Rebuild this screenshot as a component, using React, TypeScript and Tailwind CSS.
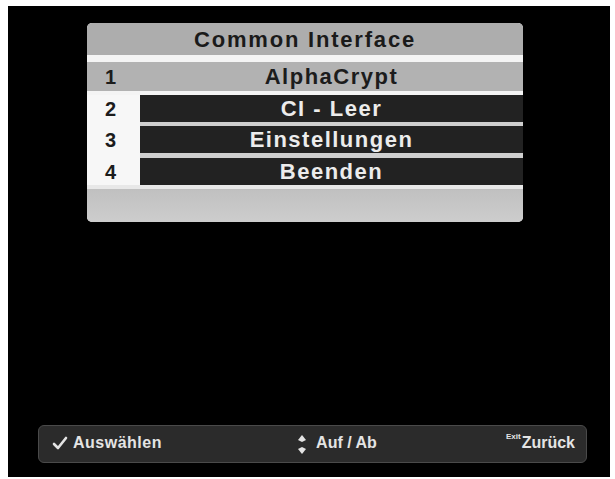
import React from "react";

const font = { fontFamily: '"Liberation Sans", Arial, sans-serif' };

function Row({ n, label, selected }: { n: string; label: string; selected?: boolean }) {
  return (
    <div className={"flex " + (selected ? "h-[29px] bg-[#b2b2b2]" : "h-[27px]")}>
      <div className="w-[53px] pl-[18px] flex items-center text-[20px] font-bold text-[#1c1c1c]">{n}</div>
      <div
        className={
          "flex-1 flex items-center justify-center text-[22px] font-bold tracking-[1.5px] " +
          (selected ? "text-[#1c1c1c]" : "bg-[#222222] text-[#ececec]")
        }
      >
        {label}
      </div>
    </div>
  );
}

export default function App() {
  return (
    <div className="w-[615px] h-[479px] bg-white pt-[6px] pl-[8px]" style={font}>
      <div className="w-[602px] h-[471px] bg-black flex flex-col">
        <div className="ml-[79px] mt-[17px] w-[436px] h-[199px] rounded-[5px] overflow-hidden bg-[#f7f7f7] flex flex-col">
          <div className="h-[32px] bg-[#adadad] flex items-center justify-center text-[22px] font-bold tracking-[1.8px] text-[#1a1a1a]">
            Common Interface
          </div>
          <div className="h-[7px] bg-[#f4f4f4]" />
          <Row n="1" label="AlphaCrypt" selected />
          <div className="h-[4px] bg-[#f4f4f4]" />
          <Row n="2" label="CI - Leer" />
          <div className="h-[4px] bg-[#f7f7f7] flex"><div className="w-[53px]" /><div className="flex-1 bg-[#cfcfcf]" /></div>
          <Row n="3" label="Einstellungen" />
          <div className="h-[5px] bg-[#f7f7f7] flex"><div className="w-[53px]" /><div className="flex-1 bg-[#cfcfcf]" /></div>
          <Row n="4" label="Beenden" />
          <div className="h-[4px] bg-[#e8e8e8]" />
          <div className="flex-1 bg-gradient-to-b from-[#c0c0c0] to-[#cdcdcd]" />
        </div>
        <div className="mt-auto mb-[14px] ml-[30px] w-[549px] h-[38px] rounded-[6px] border border-[#4a4a4a] bg-[#2b2b2b] flex items-center justify-between pl-[13px] pr-[11px] pb-[3px] text-[16px] font-bold text-[#e4e4e4]">
          <div className="flex items-center gap-[5px]">
            <svg width="16" height="14" viewBox="0 0 16 14">
              <path d="M2 8 L6 12 L14 2" fill="none" stroke="#e4e4e4" strokeWidth="2.6" strokeLinecap="round" strokeLinejoin="round" />
            </svg>
            <span className="tracking-[0.5px]">Auswählen</span>
          </div>
          <div className="flex items-center gap-[9px] ml-[6px]">
            <svg width="10" height="21" viewBox="0 0 10 21" className="mt-[3px]">
              <path d="M5 1 L9 6 L5 8 L1 6 Z" fill="#e4e4e4" />
              <path d="M5 20 L9 15 L5 13 L1 15 Z" fill="#e4e4e4" />
            </svg>
            <span>Auf / Ab</span>
          </div>
          <div className="flex items-start">
            <span className="text-[8px] font-bold leading-none mt-[2px] mr-[1px]">Exit</span>
            <span>Zurück</span>
          </div>
        </div>
      </div>
    </div>
  );
}
